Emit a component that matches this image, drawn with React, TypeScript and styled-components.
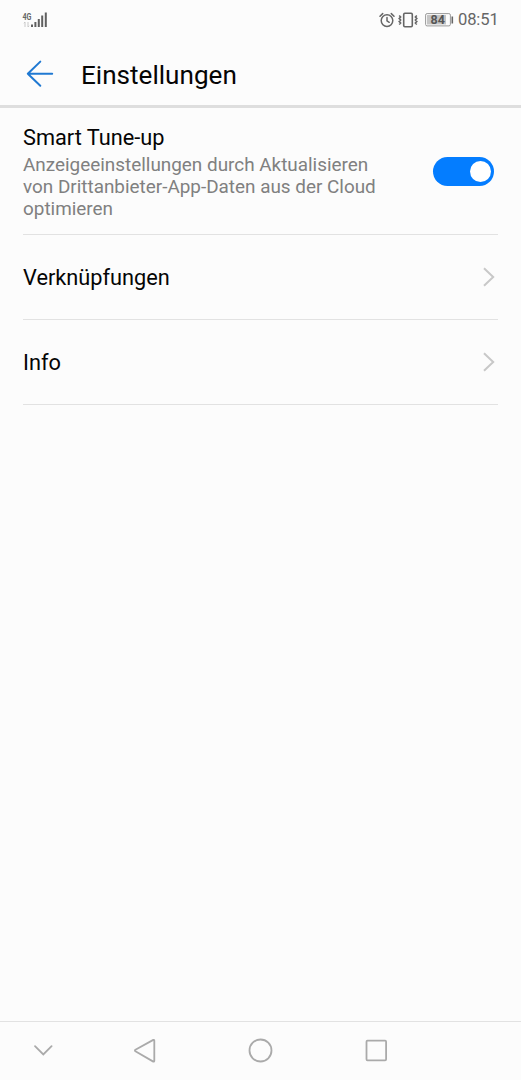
import React, { useState } from 'react';
import styled, { createGlobalStyle } from 'styled-components';

const GlobalStyle = createGlobalStyle`
  * { box-sizing: border-box; }
  body { margin: 0; background: #fcfcfc; }
  svg { display: block; flex: none; }
`;

const Screen = styled.div`
  display: flex;
  flex-direction: column;
  width: 100%;
  height: 100vh;
  background: #fcfcfc;
  color: #050505;
  font-family: Roboto, 'Noto Sans', sans-serif;
`;

const StatusBar = styled.div`
  display: flex;
  flex: none;
  justify-content: space-between;
  height: 40px;
  padding: 0 23px 0 22px;
`;

const StatusGroup = styled.div`
  display: flex;
  align-items: center;
  height: 39px;
`;

const Clock = styled.time`
  margin-left: 4px;
  width: 40px;
  font-size: 16.6px;
  letter-spacing: -0.15px;
  line-height: 40px;
  color: #666;
  white-space: nowrap;
`;

const VibrateBox = styled.span`
  display: block;
  margin: 0 7px 0 3px;
`;

const Header = styled.header`
  display: flex;
  flex: none;
  align-items: center;
  height: 68px;
  padding: 0 26px;
  border-bottom: 3px solid #dedede;
`;

const BackButton = styled.button`
  display: flex;
  padding: 0;
  margin: 2px 27px 0 0;
  border: 0;
  background: none;
`;

const Title = styled.h1`
  margin: 4px 0 0;
  font-size: 26.1px;
  font-weight: 400;
  line-height: 32px;
`;

const List = styled.main`
  flex: 1;
  padding: 0 23px;
`;

const Row = styled.div<{ $height: number }>`
  display: flex;
  align-items: center;
  justify-content: space-between;
  height: ${(p) => p.$height}px;
  border-bottom: 1px solid #e2e2e2;
`;

const RowLabel = styled.div`
  padding-top: 2px;
  font-size: 21.75px;
  line-height: 28px;
`;

const RowText = styled.div`
  width: 365px;
  padding-bottom: 1px;
`;

const Description = styled.p`
  margin: 2px 0 0;
  font-size: 18.9px;
  line-height: 22px;
  color: #808080;
`;

const Switch = styled.button<{ $on: boolean }>`
  display: flex;
  align-items: center;
  justify-content: ${(p) => (p.$on ? 'flex-end' : 'flex-start')};
  width: 61px;
  height: 29px;
  margin-right: 4.5px;
  padding: 0 3px;
  border: 0;
  border-radius: 15px;
  background: ${(p) => (p.$on ? '#047dff' : '#c4c4c4')};
`;

const Knob = styled.span`
  width: 21px;
  height: 21px;
  border-radius: 50%;
  background: #fff;
`;

const NavBar = styled.nav`
  display: flex;
  flex: none;
  align-items: center;
  height: 59px;
  padding: 0 0 1px 31px;
  border-top: 1px solid #e2e2e2;
`;

const NavItem = styled.button<{ $gap?: number }>`
  display: flex;
  margin: 0 ${(p) => p.$gap ?? 0}px 0 0;
  padding: 0;
  border: 0;
  background: none;
`;

const SignalIcon = () => (
  <svg width="27" height="20" viewBox="0 0 27 20">
    <text x="0.5" y="9.5" fontSize="9.5" fontWeight="700" fill="#666" textLength="9" lengthAdjust="spacingAndGlyphs">4G</text>
    <path d="M3 12v5M1.8 13.2L3 12M6 12v5M7.2 15.8L6 17" stroke="#c8c8c8" strokeWidth="1" fill="none" />
    <path d="M10 14.5v2.5M13.4 12v5M16.8 9v8M20.2 5.5v11.5M23.8 2.5v14.5" stroke="#606060" strokeWidth="2" />
  </svg>
);

const AlarmIcon = () => (
  <svg width="16" height="16" viewBox="0 0 16 16" fill="none" stroke="#666" strokeWidth="1.5" strokeLinecap="round">
    <circle cx="8" cy="8.6" r="5.8" />
    <path d="M8 5.5v3.4l2.2 1.4M1 4.2L3.7 1.6M15 4.2l-2.7-2.6" />
  </svg>
);

const VibrateIcon = () => (
  <svg width="20" height="16" viewBox="0 0 20 16" fill="none" stroke="#666" strokeWidth="1.6">
    <rect x="5.7" y="1.3" width="8.6" height="13.4" rx="1.2" />
    <path d="M1.2 3.5l1.4 1.5-1.4 1.5 1.4 1.5-1.4 1.5 1.4 1.5-1.4 1.5M18.8 3.5l-1.4 1.5 1.4 1.5-1.4 1.5 1.4 1.5-1.4 1.5 1.4 1.5" />
  </svg>
);

const BatteryIcon = () => (
  <svg width="29" height="14" viewBox="0 0 29 14">
    <rect x="0.6" y="0.6" width="24.8" height="12.3" rx="1.5" fill="#fcfcfc" stroke="#999" strokeWidth="1" />
    <rect x="2" y="2" width="19" height="9.5" fill="#c5c5c5" />
    <path d="M27.3 3.5v7" stroke="#666" strokeWidth="1.6" />
    <text x="5.5" y="11.3" fontSize="12.5" fontWeight="700" fill="#555" textLength="14.5">84</text>
  </svg>
);

const BackArrow = () => (
  <svg width="28" height="28" viewBox="0 0 28 28" fill="none" stroke="#2079d2" strokeWidth="2" strokeLinecap="round" strokeLinejoin="round">
    <path d="M14.3 1.6L1.8 13.8 14.3 25.8M1.8 13.8H26.2" />
  </svg>
);

const Chevron = () => (
  <svg width="16" height="22" viewBox="0 0 16 22" fill="none" stroke="#c8c8c8" strokeWidth="2">
    <path d="M2 2.2L11.2 11 2 19.8" />
  </svg>
);

export default function App() {
  const [enabled, setEnabled] = useState(true);
  return (
    <Screen>
      <GlobalStyle />
      <StatusBar>
        <StatusGroup><SignalIcon /></StatusGroup>
        <StatusGroup>
          <AlarmIcon />
          <VibrateBox><VibrateIcon /></VibrateBox>
          <BatteryIcon />
          <Clock>08:51</Clock>
        </StatusGroup>
      </StatusBar>
      <Header>
        <BackButton aria-label="Zurück"><BackArrow /></BackButton>
        <Title>Einstellungen</Title>
      </Header>
      <List>
        <Row $height={127}>
          <RowText>
            <RowLabel>Smart Tune-up</RowLabel>
            <Description>
              Anzeigeeinstellungen durch Aktualisieren von Drittanbieter-App-Daten aus der Cloud optimieren
            </Description>
          </RowText>
          <Switch $on={enabled} role="switch" aria-checked={enabled} onClick={() => setEnabled(!enabled)}>
            <Knob />
          </Switch>
        </Row>
        <Row $height={85}>
          <RowLabel>Verknüpfungen</RowLabel>
          <Chevron />
        </Row>
        <Row $height={85}>
          <RowLabel>Info</RowLabel>
          <Chevron />
        </Row>
      </List>
      <NavBar>
        <NavItem $gap={78}>
          <svg width="24" height="24" viewBox="0 0 24 24" fill="none" stroke="#aaa" strokeWidth="1.8" strokeLinecap="round">
            <path d="M4 7.2l8.3 8.3 8.3-8.3" />
          </svg>
        </NavItem>
        <NavItem $gap={89}>
          <svg width="26" height="26" viewBox="0 0 26 26" fill="none" stroke="#aaa" strokeWidth="1.8" strokeLinejoin="round">
            <path d="M20.3 1.9L2.4 11.7q-1 .8 0 1.6L20.3 23.6q1 .3 1-.8V2.7q0-1.1-1-.8z" />
          </svg>
        </NavItem>
        <NavItem $gap={91}>
          <svg width="26" height="26" viewBox="0 0 26 26" fill="none" stroke="#aaa" strokeWidth="1.8">
            <circle cx="12.5" cy="12.5" r="11" />
          </svg>
        </NavItem>
        <NavItem>
          <svg width="26" height="26" viewBox="0 0 26 26" fill="none" stroke="#aaa" strokeWidth="1.8">
            <rect x="1.5" y="2.7" width="19.6" height="19.6" rx="1" />
          </svg>
        </NavItem>
      </NavBar>
    </Screen>
  );
}
